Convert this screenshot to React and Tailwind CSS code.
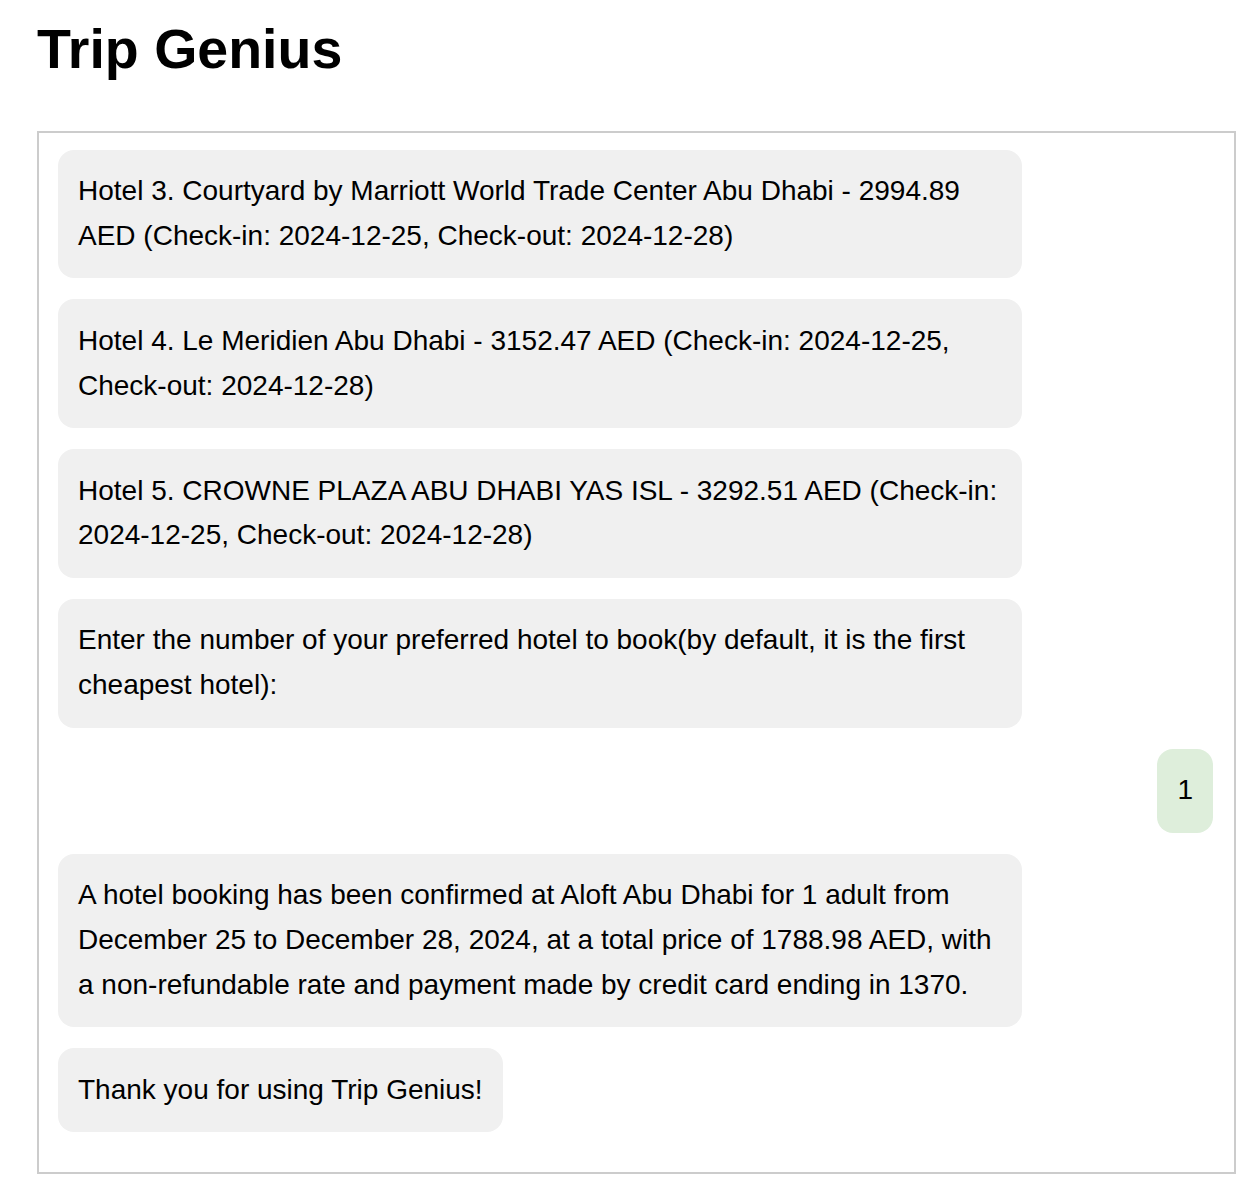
import React from "react";

const messages = [
  { from: "bot", text: "Hotel 3. Courtyard by Marriott World Trade Center Abu Dhabi - 2994.89 AED (Check-in: 2024-12-25, Check-out: 2024-12-28)" },
  { from: "bot", text: "Hotel 4. Le Meridien Abu Dhabi - 3152.47 AED (Check-in: 2024-12-25, Check-out: 2024-12-28)" },
  { from: "bot", text: "Hotel 5. CROWNE PLAZA ABU DHABI YAS ISL - 3292.51 AED (Check-in: 2024-12-25, Check-out: 2024-12-28)" },
  { from: "bot", text: "Enter the number of your preferred hotel to book(by default, it is the first cheapest hotel):" },
  { from: "user", text: "1" },
  { from: "bot", text: "A hotel booking has been confirmed at Aloft Abu Dhabi for 1 adult from December 25 to December 28, 2024, at a total price of 1788.98 AED, with a non-refundable rate and payment made by credit card ending in 1370." },
  { from: "bot", text: "Thank you for using Trip Genius!" },
];

function Bubble({ from, text }) {
  const isUser = from === "user";
  return (
    <div className={isUser ? "flex justify-end" : "flex justify-start"}>
      <div
        className={
          "max-w-[964px] rounded-[16px] px-[20px] py-[19.6px] text-[28px] leading-[1.6] text-black " +
          (isUser ? "bg-[#deeedb]" : "bg-[#f0f0f0]")
        }
      >
        {text}
      </div>
    </div>
  );
}

export default function App() {
  return (
    <div className="min-h-[1198px] bg-white pl-[37px] pt-[22px] font-['Liberation_Sans',Arial,sans-serif]">
      <h1 className="text-[55.5px] font-bold leading-none text-black">Trip Genius</h1>

      {/* Chat window */}
      <div className="mt-[53.5px] flex w-[1199px] flex-col gap-[21px] border-2 border-[#cccccc] pb-[40px] pl-[19px] pr-[21px] pt-[16.5px]">
        {messages.map((m, i) => (
          <Bubble key={i} from={m.from} text={m.text} />
        ))}
      </div>
    </div>
  );
}
